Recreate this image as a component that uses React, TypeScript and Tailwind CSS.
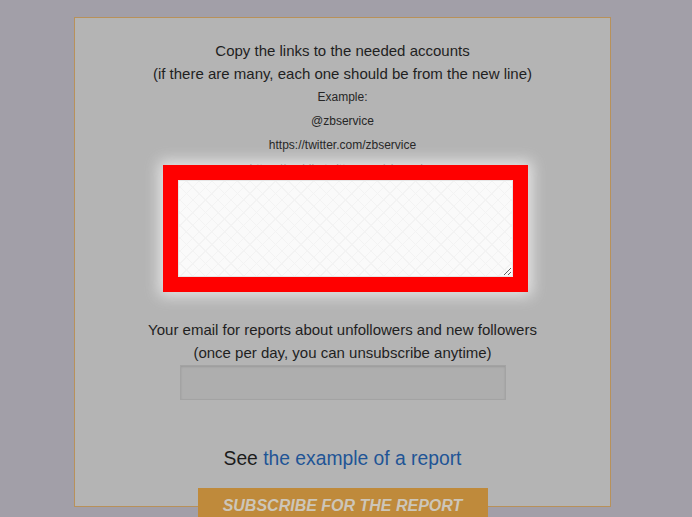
import React from "react";

export default function App() {
  return (
    <div className="min-h-[517px] w-[692px] overflow-hidden bg-[#a29fa8] pt-[17px] font-['Liberation_Sans',Arial,sans-serif]">
      <div className="ml-[74px] w-[537px] border-[1.5px] border-[#b8915a] bg-[#b4b4b4] mb-[-40px]">
        <div className="flex flex-col items-center pt-[21px]">
          <p className="text-[15px] leading-[23px] text-[#1f1f1f]">Copy the links to the needed accounts</p>
          <p className="text-[15px] leading-[23px] text-[#1f1f1f]">(if there are many, each one should be from the new line)</p>
          <p className="text-[12px] leading-[24px] text-[#262626]">Example:</p>
          <p className="text-[12px] leading-[24px] text-[#262626]">@zbservice</p>
          <p className="text-[12px] leading-[24px] text-[#262626]">https://twitter.com/zbservice</p>
          <p className="text-[12px] leading-[24px] text-[#262626]">https://mobile.twitter.com/zbservice</p>
          <div className="relative z-10 mt-[-16px] ml-[5px] h-[127px] w-[365px] border-[15px] border-[#ff0000] bg-[#fafafa] shadow-[0_0_14px_4px_rgba(235,235,235,0.9)]">
            <textarea className="block h-full w-full resize border border-[#e6e6e6] bg-[#fafafa] bg-[repeating-linear-gradient(45deg,#f3f3f3_0_1px,transparent_1px_9px),repeating-linear-gradient(-45deg,#f3f3f3_0_1px,transparent_1px_9px)] outline-none" />
          </div>
          <p className="mt-[26px] text-[15px] leading-[23px] text-[#1f1f1f]">Your email for reports about unfollowers and new followers</p>
          <p className="text-[15px] leading-[23px] text-[#1f1f1f]">(once per day, you can unsubscribe anytime)</p>
          <input className="mt-[1px] h-[35px] w-[326px] border border-[#a3a3a3] bg-[#aeaeae] shadow-[inset_0_1px_2px_rgba(0,0,0,0.12)] outline-none" />
          <p className="mt-[46px] text-[19.3px] leading-[26px] text-[#1c1c1c]">
            See <span className="text-[#1f5596]">the example of a report</span>
          </p>
          <div className="relative z-10 mt-[16px] mb-[-18px] flex h-[36px] w-[290px] items-center justify-center bg-[#bf8a3b]">
            <span className="text-[16px] font-bold italic text-[#cdc6b9]">SUBSCRIBE FOR THE REPORT</span>
          </div>
        </div>
      </div>
    </div>
  );
}
